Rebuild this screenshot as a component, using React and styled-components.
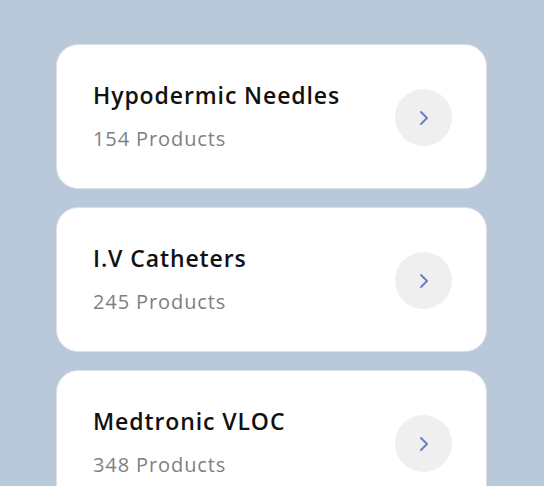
import React from "react";
import styled, { createGlobalStyle } from "styled-components";

const Global = createGlobalStyle`
  html, body { margin: 0; padding: 0; background: #b9c9d9; }
  body { font-family: "Open Sans", "Liberation Sans", sans-serif; }
`;

const Page = styled.div`
  min-height: 486px;
  box-sizing: border-box;
  padding: 44px 0 0 56px;
  display: flex;
  flex-direction: column;
  gap: 18px;
`;

const Card = styled.div`
  box-sizing: border-box;
  width: 431px;
  height: 145px;
  flex-shrink: 0;
  background: #ffffff;
  border: 1px solid #dbe0e6;
  border-radius: 22px;
  padding: 0 34px 2px 36px;
  display: flex;
  align-items: center;
  justify-content: space-between;
`;

const Info = styled.div`
  display: flex;
  flex-direction: column;
  gap: 19px;
`;

const Title = styled.div`
  font-size: 23px;
  line-height: 26px;
  font-weight: 600;
  color: #111111;
  letter-spacing: 0.9px;
`;

const Count = styled.div`
  font-size: 20px;
  line-height: 23px;
  font-weight: 400;
  color: #7f7f7f;
  letter-spacing: 0.9px;
`;

const ArrowButton = styled.button`
  width: 57px;
  height: 57px;
  border-radius: 50%;
  border: none;
  background: #efefef;
  display: flex;
  align-items: center;
  justify-content: center;
  padding: 0;
  margin-top: 4px;
  cursor: pointer;
`;

const Chevron = () => (
  <svg width="14" height="18" viewBox="0 0 14 18" fill="none">
    <path d="M4 3 L10 9 L4 15" stroke="#6b80c4" strokeWidth="2" strokeLinecap="round" strokeLinejoin="round" />
  </svg>
);

const items = [
  { name: "Hypodermic Needles", count: 154 },
  { name: "I.V Catheters", count: 245 },
  { name: "Medtronic VLOC", count: 348 },
];

export default function App() {
  return (
    <>
      <Global />
      <Page>
        {items.map((it) => (
          <Card key={it.name}>
            <Info>
              <Title>{it.name}</Title>
              <Count>{it.count} Products</Count>
            </Info>
            <ArrowButton aria-label={`Open ${it.name}`}>
              <Chevron />
            </ArrowButton>
          </Card>
        ))}
      </Page>
    </>
  );
}
